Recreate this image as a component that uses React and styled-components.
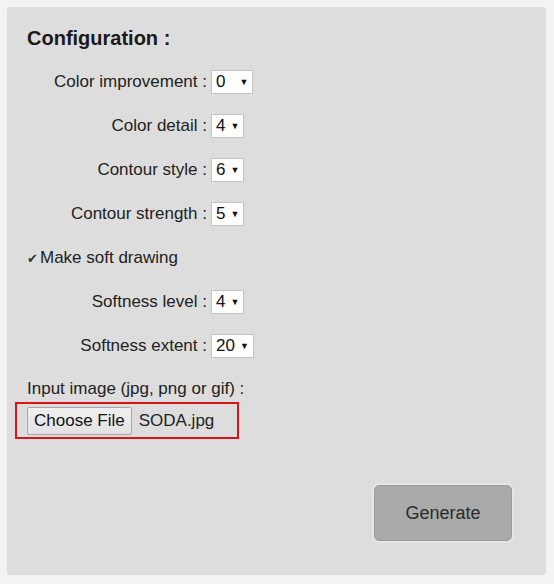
import React from "react"
import styled, { createGlobalStyle } from "styled-components"

const GlobalStyle = createGlobalStyle`
  html, body {
    margin: 0;
    padding: 0;
    background: #f3f3f3;
    font-family: "Liberation Sans", Arial, sans-serif;
  }
`

const Page = styled.div`
  padding: 7px 8px 9px 7px;
  width: 554px;
  box-sizing: border-box;
`

const Panel = styled.form`
  background: #dddddd;
  border-radius: 4px;
  height: 568px;
  box-sizing: border-box;
  padding: 16px 20px 0 20px;
  display: flex;
  flex-direction: column;
`

const Title = styled.h2`
  margin: 0 0 7px 0;
  font-size: 20px;
  line-height: 30px;
  font-weight: bold;
  color: #1a1a1a;
`

const Row = styled.div`
  height: 44px;
  display: grid;
  grid-template-columns: 180px auto;
  column-gap: 4px;
  align-items: center;
  justify-items: start;
`

const Label = styled.span`
  justify-self: end;
  font-size: 17px;
  color: #222;
  white-space: nowrap;
`

const Select = styled.div`
  height: 24px;
  box-sizing: border-box;
  background: #fff;
  border: 1px solid #c4c4c4;
  display: flex;
  align-items: center;
  padding: 0 4px 0 4px;
  gap: ${p => p.$gap}px;
  font-size: 17px;
  color: #111;
`

const Arrow = styled.span`
  font-size: 9px;
  line-height: 1;
  margin-top: 1px;
`

const CheckRow = styled.label`
  height: 44px;
  display: flex;
  align-items: center;
  font-size: 17px;
  color: #222;
`

const Tick = styled.span`
  font-size: 13px;
  width: 13px;
  color: #333;
`

const InputLabel = styled.div`
  margin-top: 11px;
  font-size: 17px;
  line-height: 20px;
  color: #222;
`

const FileBox = styled.div`
  margin: 3px 0 0 -12px;
  width: 224px;
  height: 37px;
  box-sizing: border-box;
  border: 2px solid #d9141c;
  display: flex;
  align-items: center;
  padding-left: 10px;
  gap: 7px;
`

const FileButton = styled.span`
  height: 28px;
  box-sizing: border-box;
  padding: 0 6px;
  display: flex;
  align-items: center;
  background: linear-gradient(#f0f0f0, #e2e2e2);
  border: 1px solid #a8a8a8;
  border-radius: 2px;
  font-size: 17px;
  color: #111;
`

const FileName = styled.span`
  font-size: 17px;
  color: #222;
`

const Footer = styled.div`
  display: flex;
  justify-content: flex-end;
  margin-top: 46px;
  padding-right: 14px;
`

const Generate = styled.button`
  width: 138px;
  height: 56px;
  background: #aaaaaa;
  border: 1px solid #9c9c9c;
  border-radius: 5px;
  box-shadow: 0 0 0 2px #e6e6e6;
  font-family: "Liberation Sans", Arial, sans-serif;
  font-size: 18px;
  color: #2a2a2a;
`

const rows = [
  { label: "Color improvement :", value: "0", gap: 14 },
  { label: "Color detail :", value: "4", gap: 5 },
  { label: "Contour style :", value: "6", gap: 5 },
  { label: "Contour strength :", value: "5", gap: 5 },
]

const softRows = [
  { label: "Softness level :", value: "4", gap: 5 },
  { label: "Softness extent :", value: "20", gap: 5 },
]

function SettingRow({ label, value, gap }) {
  return (
    <Row>
      <Label>{label}</Label>
      <Select $gap={gap}>
        {value}
        <Arrow>▼</Arrow>
      </Select>
    </Row>
  )
}

export default function App() {
  return (
    <Page>
      <GlobalStyle />
      <Panel onSubmit={e => e.preventDefault()}>
        <Title>Configuration :</Title>
        {rows.map(r => <SettingRow key={r.label} {...r} />)}
        <CheckRow>
          <Tick>✔</Tick>Make soft drawing
        </CheckRow>
        {softRows.map(r => <SettingRow key={r.label} {...r} />)}
        <InputLabel>Input image (jpg, png or gif) :</InputLabel>
        <FileBox>
          <FileButton>Choose File</FileButton>
          <FileName>SODA.jpg</FileName>
        </FileBox>
        <Footer>
          <Generate type="button">Generate</Generate>
        </Footer>
      </Panel>
    </Page>
  )
}
